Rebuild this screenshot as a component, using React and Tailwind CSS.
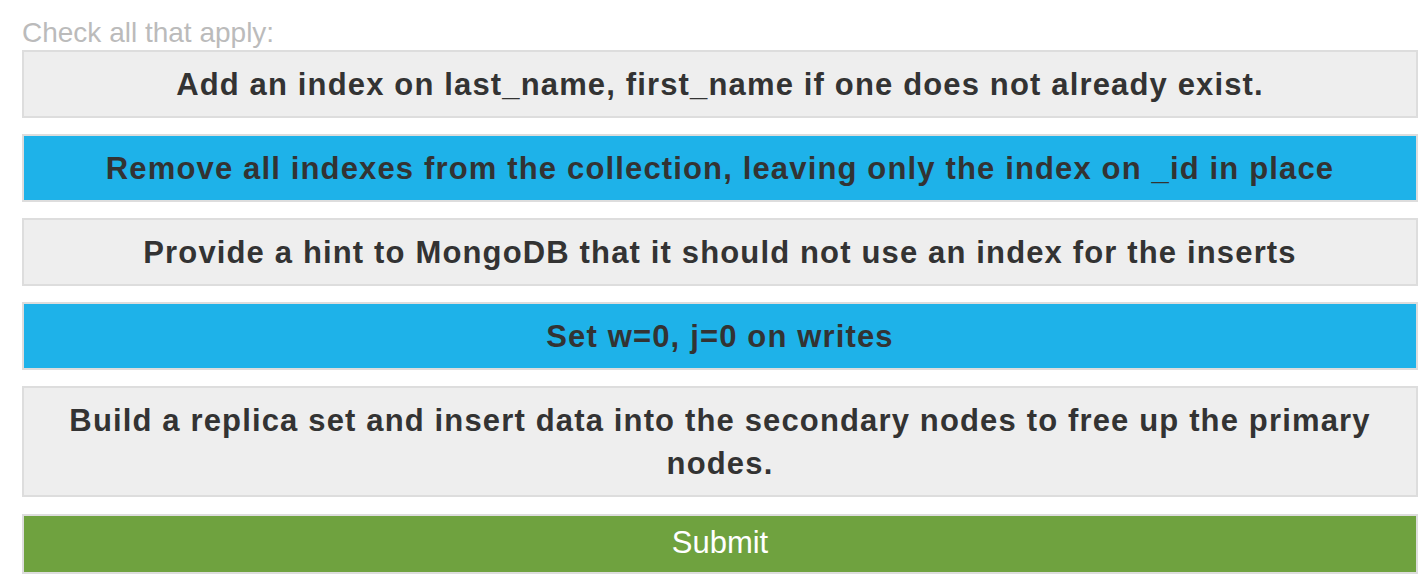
import { useState } from 'react';

const options = [
  { id: 1, text: 'Add an index on last_name, first_name if one does not already exist.' },
  { id: 2, text: 'Remove all indexes from the collection, leaving only the index on _id in place' },
  { id: 3, text: 'Provide a hint to MongoDB that it should not use an index for the inserts' },
  { id: 4, text: 'Set w=0, j=0 on writes' },
  { id: 5, text: 'Build a replica set and insert data into the secondary nodes to free up the primary nodes.' },
];

export default function App() {
  const [checked, setChecked] = useState({ 2: true, 4: true });

  const toggle = (id) => setChecked(prev => ({ ...prev, [id]: !prev[id] }));

  return (
    <div className="min-h-screen bg-white pl-[22px] pt-[17px] font-['Liberation_Sans',Arial,sans-serif]">
      <p className="text-[28px] leading-[32px] font-light text-[#bbbbbb] mb-[1px]">Check all that apply:</p>
      <div className="flex flex-col gap-[16px]">
        {options.map(o => (
          <button
            key={o.id}
            type="button"
            onClick={() => toggle(o.id)}
            className={`w-full border-2 border-[#dddddd] pt-[11px] pb-[10px] px-[36px] text-center text-[31px] leading-[43px] font-bold tracking-[1.15px] text-[#333333] ${checked[o.id] ? 'bg-[#1eb2e9]' : 'bg-[#eeeeee]'}`}
          >
            {o.text}
          </button>
        ))}
        <button
          type="button"
          className="mt-[1px] w-full border-2 border-[#dddddd] bg-[#6fa23f] pt-[5px] pb-[8px] text-center text-[31px] leading-[43px] text-white"
        >
          Submit
        </button>
      </div>
    </div>
  );
}
